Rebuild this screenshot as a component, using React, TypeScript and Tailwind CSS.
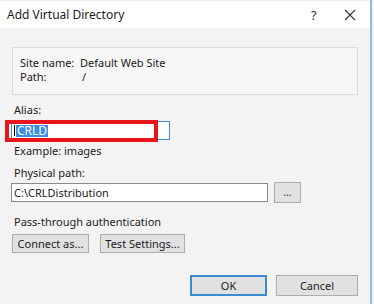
import React from "react";

export default function App() {
  const font = { fontFamily: '"Noto Sans", "Open Sans", Arial, sans-serif' };
  return (
    <div className="w-[374px] h-[304px] flex bg-white overflow-hidden text-[11px] leading-[14px] text-[#1b1b1b]" style={font}>
      <div className="w-[370px] h-[304px] flex flex-col bg-[#f3f3f3] border-t border-[#e6eef5]">
        <div className="h-[27px] bg-white flex items-center pl-[7px] text-[12px]">
          <span className="flex-1">Add Virtual Directory</span>
          <span className="w-[10px] text-[13px] text-[#333] mr-[23px]">?</span>
          <svg width="12" height="12" viewBox="0 0 12 12" className="mr-[14px]">
            <path d="M1 1 L11 11 M11 1 L1 11" stroke="#333" strokeWidth="1.1" fill="none" />
          </svg>
        </div>
        <div className="flex-1 flex flex-col pl-[12px] pr-[12px]">
          <div className="mt-[19px] h-[48px] border border-[#dcdcdc] bg-[#f6f6f6] pt-[8px] pl-[7px] flex flex-col">
            <div className="flex h-[14px]">
              <span className="w-[60px]">Site name:</span>
              <span>Default Web Site</span>
            </div>
            <div className="flex h-[14px]">
              <span className="w-[62px]">Path:</span>
              <span>/</span>
            </div>
          </div>
          <div className="mt-[8px] pl-[2px] h-[14px]">Alias:</div>
          <div className="relative mt-[4px] -ml-[1px] w-[159px] h-[19px] border border-[#3c8fe0] bg-white flex items-center pl-[2px]">
            <span className="w-px h-[11px] bg-black mr-px" />
            <span className="bg-[#3a8ee6] text-white leading-[12px] text-[12px] px-[1px]">CRLD</span>
            <div className="absolute left-[-7px] top-[-2px] w-[153px] h-[22px] border-[4px] border-[#e8151b]" />
          </div>
          <div className="mt-[4px] pl-[2px] h-[14px]">Example: images</div>
          <div className="mt-[8px] pl-[2px] h-[14px]">Physical path:</div>
          <div className="mt-[2px] -ml-[1px] flex items-center">
            <div className="w-[257px] h-[19px] border border-[#8a8a8a] bg-white flex items-center pl-[2px]">C:\CRLDistribution</div>
            <div className="ml-[6px] w-[27px] h-[21px] border border-[#adadad] bg-[#e1e1e1] flex items-center justify-center text-[10px] leading-none pb-[2px]">...</div>
          </div>
          <div className="mt-[12px] pl-[2px] h-[14px]">Pass-through authentication</div>
          <div className="mt-[5px] flex gap-[11px]">
            <div className="w-[77px] h-[19px] border border-[#adadad] bg-[#e1e1e1] flex items-center justify-center">Connect as...</div>
            <div className="w-[85px] h-[19px] border border-[#adadad] bg-[#e1e1e1] flex items-center justify-center">Test Settings...</div>
          </div>
          <div className="mt-[22px] flex justify-end gap-[9px]">
            <div className="w-[77px] h-[21px] border-2 border-[#3b8ad4] bg-[#e1e1e1] flex items-center justify-center">OK</div>
            <div className="w-[82px] h-[21px] border border-[#adadad] bg-[#e1e1e1] flex items-center justify-center">Cancel</div>
          </div>
        </div>
      </div>
      <div className="w-[2px] h-[304px] bg-[#8fbde3]" />
      <div className="w-[2px] h-[304px] bg-[#f2f2f2]" />
    </div>
  );
}
